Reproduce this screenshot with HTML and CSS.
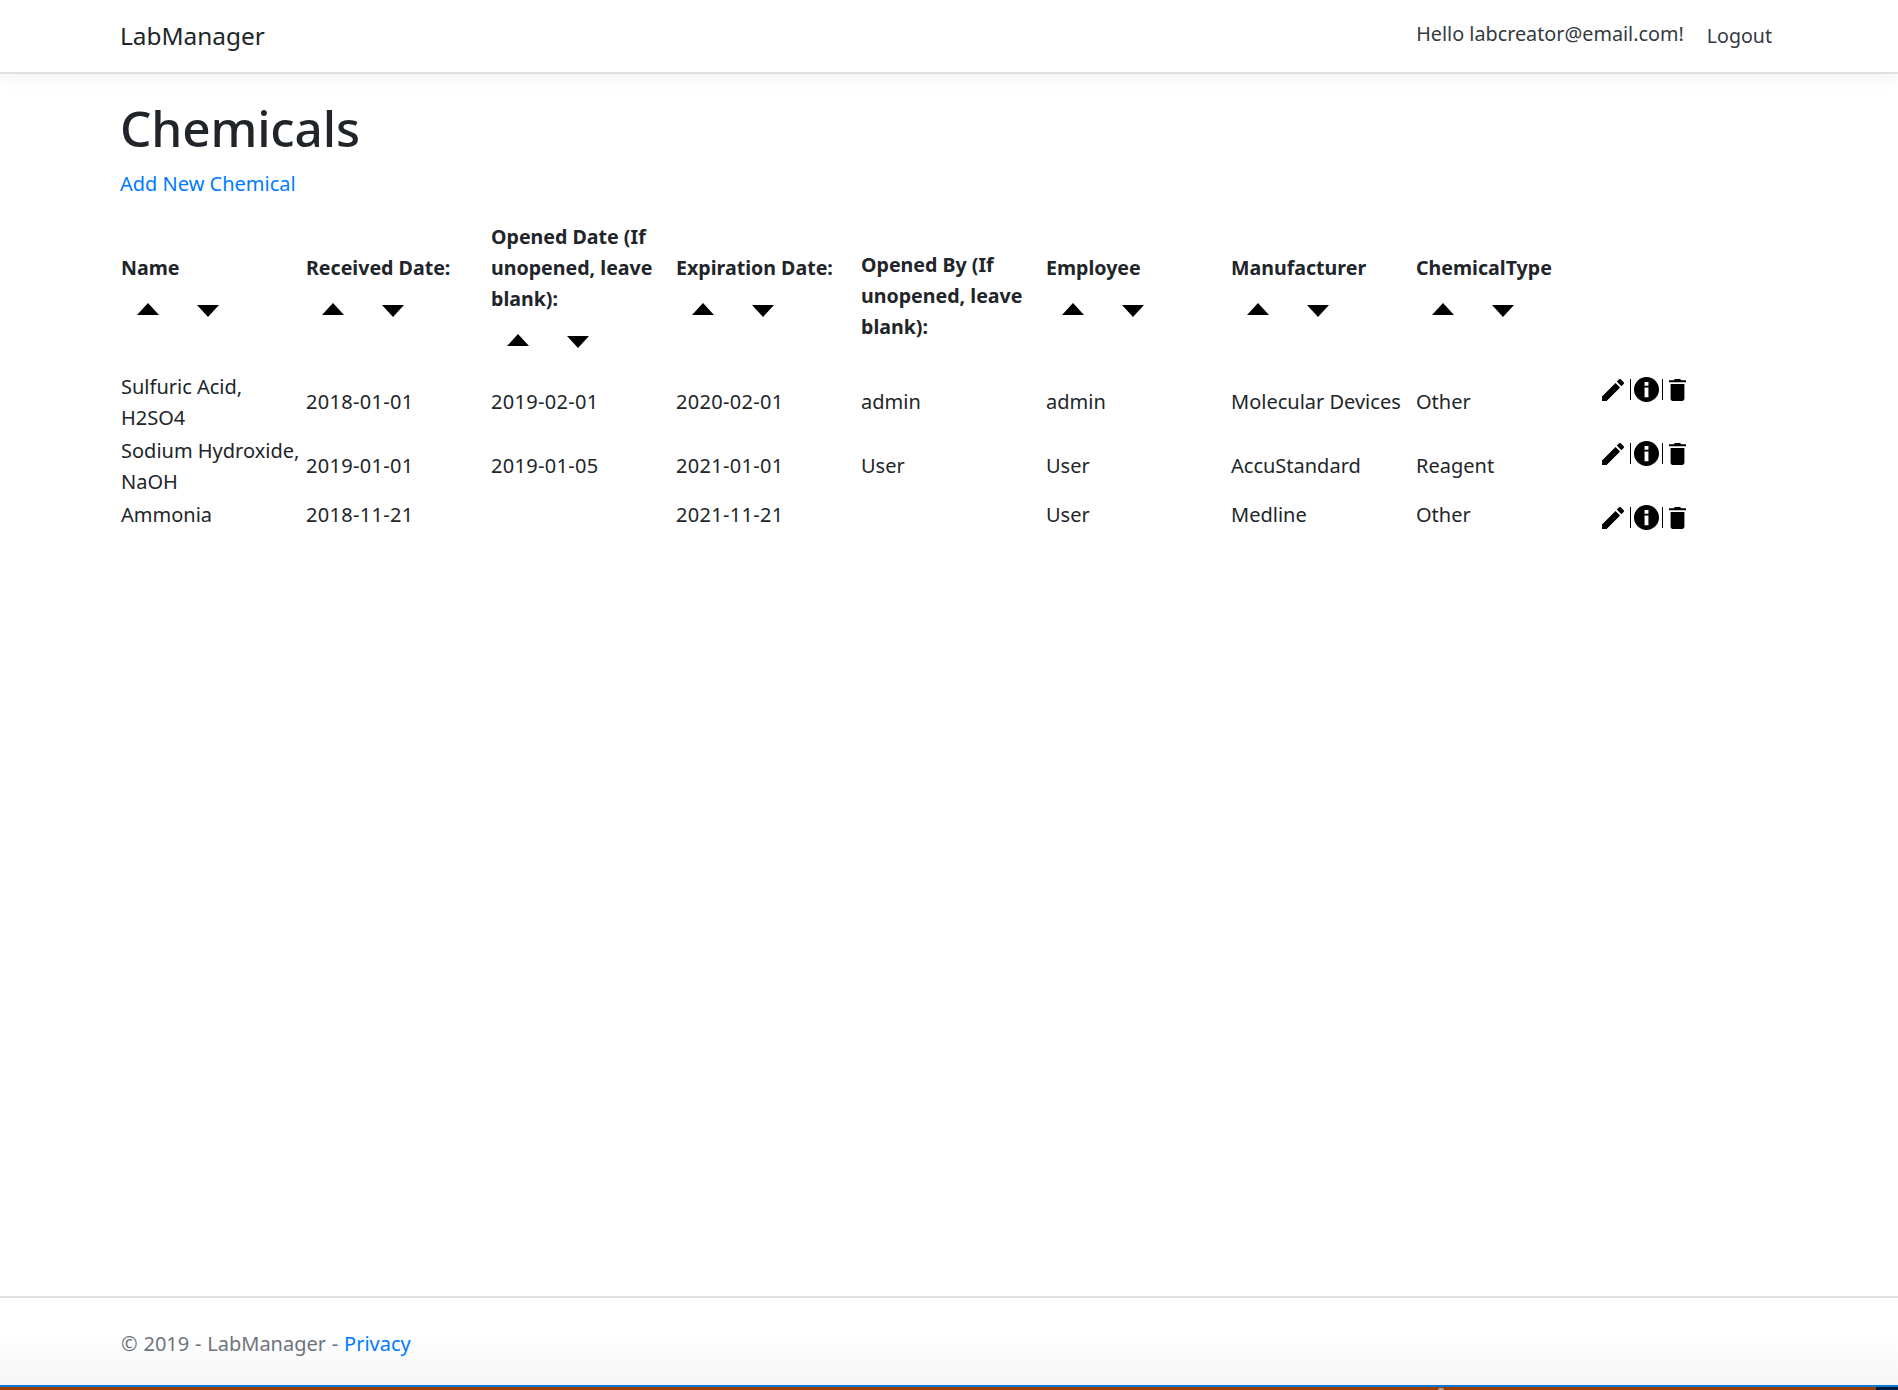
FILE: index.html
```html
<!DOCTYPE html>
<html lang="en">
<head>
<meta charset="utf-8">
<title>Chemicals - LabManager</title>
<link rel="stylesheet" href="styles.css">
</head>
<body>
<svg class="defs" aria-hidden="true">
  <symbol id="up" viewBox="0 0 22 12"><path d="M11 0 22 12H0Z"/></symbol>
  <symbol id="down" viewBox="0 0 22 12"><path d="M0 0H22L11 12Z"/></symbol>
  <symbol id="pencil" viewBox="3 3 18 18"><path d="M3 17.25V21h3.75L17.81 9.94l-3.75-3.75L3 17.25zM20.71 7.04a1 1 0 0 0 0-1.41l-2.34-2.34a1 1 0 0 0-1.41 0l-1.83 1.83 3.75 3.75 1.83-1.83z"/></symbol>
  <symbol id="info" viewBox="1 1 22 22"><path fill-rule="evenodd" d="M12 1a11 11 0 1 0 0 22 11 11 0 0 0 0-22zM10.300 5.500h3.400v3.200h-3.400zM10.300 10.300h3.400v8.500h-3.400z"/></symbol>
  <symbol id="trash" viewBox="4 2.500 16 20.500"><path d="M5.500 21c0 1.100.9 2 2 2h9a2 2 0 0 0 2-2V7h-13zM20 3.500H15.500L14.500 2.500h-5l-1 1H4V5.500h16z"/></symbol>
</svg>
<header class="navbar">
  <a class="brand" href="#">LabManager</a>
  <nav class="user-nav">
    <span class="hello">Hello labcreator@email.com!</span>
    <a class="logout" href="#">Logout</a>
  </nav>
</header>
<main class="content">
  <h1>Chemicals</h1>
  <p class="add"><a href="#">Add New Chemical</a></p>
  <table class="grid">
    <thead>
      <tr>
        <th>Name<div class="sort"><svg class="arrow"><use href="#up"/></svg><svg class="arrow arrow-down"><use href="#down"/></svg></div></th>
        <th>Received Date:<div class="sort"><svg class="arrow"><use href="#up"/></svg><svg class="arrow arrow-down"><use href="#down"/></svg></div></th>
        <th>Opened Date (If unopened, leave blank):<div class="sort"><svg class="arrow"><use href="#up"/></svg><svg class="arrow arrow-down"><use href="#down"/></svg></div></th>
        <th>Expiration Date:<div class="sort"><svg class="arrow"><use href="#up"/></svg><svg class="arrow arrow-down"><use href="#down"/></svg></div></th>
        <th>Opened By (If unopened, leave blank):</th>
        <th>Employee<div class="sort"><svg class="arrow"><use href="#up"/></svg><svg class="arrow arrow-down"><use href="#down"/></svg></div></th>
        <th>Manufacturer<div class="sort"><svg class="arrow"><use href="#up"/></svg><svg class="arrow arrow-down"><use href="#down"/></svg></div></th>
        <th>ChemicalType<div class="sort"><svg class="arrow"><use href="#up"/></svg><svg class="arrow arrow-down"><use href="#down"/></svg></div></th>
        <th></th>
      </tr>
    </thead>
    <tbody>
      <tr>
        <td>Sulfuric Acid, H2SO4</td><td class="date">2018-01-01</td><td class="date">2019-02-01</td><td class="date">2020-02-01</td><td>admin</td><td>admin</td><td>Molecular Devices</td><td>Other</td>
        <td class="actions"><div class="icons"><svg class="ic pencil"><use href="#pencil"/></svg><i class="sep"></i><svg class="ic info"><use href="#info"/></svg><i class="sep"></i><svg class="ic trash"><use href="#trash"/></svg></div></td>
      </tr>
      <tr>
        <td>Sodium Hydroxide, NaOH</td><td class="date">2019-01-01</td><td class="date">2019-01-05</td><td class="date">2021-01-01</td><td>User</td><td>User</td><td>AccuStandard</td><td>Reagent</td>
        <td class="actions"><div class="icons"><svg class="ic pencil"><use href="#pencil"/></svg><i class="sep"></i><svg class="ic info"><use href="#info"/></svg><i class="sep"></i><svg class="ic trash"><use href="#trash"/></svg></div></td>
      </tr>
      <tr>
        <td>Ammonia</td><td class="date">2018-11-21</td><td></td><td class="date">2021-11-21</td><td></td><td>User</td><td>Medline</td><td>Other</td>
        <td class="actions"><div class="icons"><svg class="ic pencil"><use href="#pencil"/></svg><i class="sep"></i><svg class="ic info"><use href="#info"/></svg><i class="sep"></i><svg class="ic trash"><use href="#trash"/></svg></div></td>
      </tr>
    </tbody>
  </table>
</main>
<footer class="footer">
  <div class="footer-text">© 2019 - LabManager - <a href="#">Privacy</a></div>
</footer>
<div class="taskbar"><div class="task-blue"></div><div class="task-brown"><div class="task-peek"></div><div class="task-end"></div></div></div>
</body>
</html>
```
FILE: styles.css
```css
* { box-sizing: border-box; }
html, body { margin: 0; height: 100%; }
body {
  width: 1898px;
  height: 1390px;
  display: flex;
  flex-direction: column;
  overflow: hidden;
  background: #fff;
  color: #212529;
  font-family: "Noto Sans", "Open Sans", sans-serif;
  font-size: 20px;
  line-height: 31px;
}
.defs { display: none; }
a { color: #007bff; text-decoration: none; }
.navbar {
  flex: none;
  height: 74px;
  padding: 0 126px 1px 120px;
  display: flex;
  align-items: center;
  justify-content: space-between;
  border-bottom: 2px solid #dee2e6;
  box-shadow: 0 5px 16px rgba(0, 0, 0, .05);
}
.brand { color: #212529; font-size: 24.400px; }
.user-nav { display: flex; align-items: center; gap: 23px; color: #343a40; font-size: 19.800px; padding-bottom: 1px; }
.hello { position: relative; top: -2px; }
.logout { color: #343a40; font-size: 19.600px; }
.content { flex: 1; padding: 23px 0 0 120px; }
h1 { margin: 0 0 9px; font-size: 49.500px; font-weight: 500; line-height: 62px; letter-spacing: -.15px; }
.add { margin: 0 0 22px; }
.grid { width: 1665px; table-layout: fixed; border-collapse: collapse; }
th, td { padding: 1px; vertical-align: middle; text-align: left; }
th { padding: 0 1px; font-weight: 700; font-size: 19.600px; }
tbody tr:not(:last-child) td:not(:first-child) { padding: 0 1px 2px; }
.date { letter-spacing: .3px; }
.sort { display: flex; gap: 38px; height: 56px; padding: 20px 0 0 16px; align-items: flex-start; }
.arrow { width: 22px; height: 12px; fill: #000; }
.arrow-down { margin-top: 2px; }
.actions { vertical-align: top; }
.icons { display: flex; align-items: center; height: 25px; margin-top: 6px; padding-left: 1px; }
tbody tr:not(:last-child) .icons { margin-top: 7px; }
.ic { fill: #000; flex: none; }
.pencil { width: 22px; height: 22px; margin-right: 5.500px; }
.info { width: 25px; height: 25px; margin: 0 3.500px 0 3px; }
.trash { width: 17px; height: 22px; margin-left: 6px; }
.sep { flex: none; width: 1px; height: 21px; background: #000; }
.footer {
  flex: none;
  height: 89px;
  border-top: 2px solid #dee2e6;
  padding: 30px 120px 0 121px;
  color: #6c757d;
  word-spacing: .6px;
  background: linear-gradient(#fff 45%, #f5f5f5);
}
.taskbar { flex: none; height: 5px; }
.task-blue { height: 2px; background: #0f78d4; }
.task-brown { height: 3px; background: #9a3f00; display: flex; justify-content: space-between; align-items: flex-end; padding-left: 1438px; }
.task-peek { width: 6px; height: 2px; background: #a8a8a8; border-radius: 2px 2px 0 0; }
.task-end { width: 22px; height: 3px; background: #001a3d; }
```
